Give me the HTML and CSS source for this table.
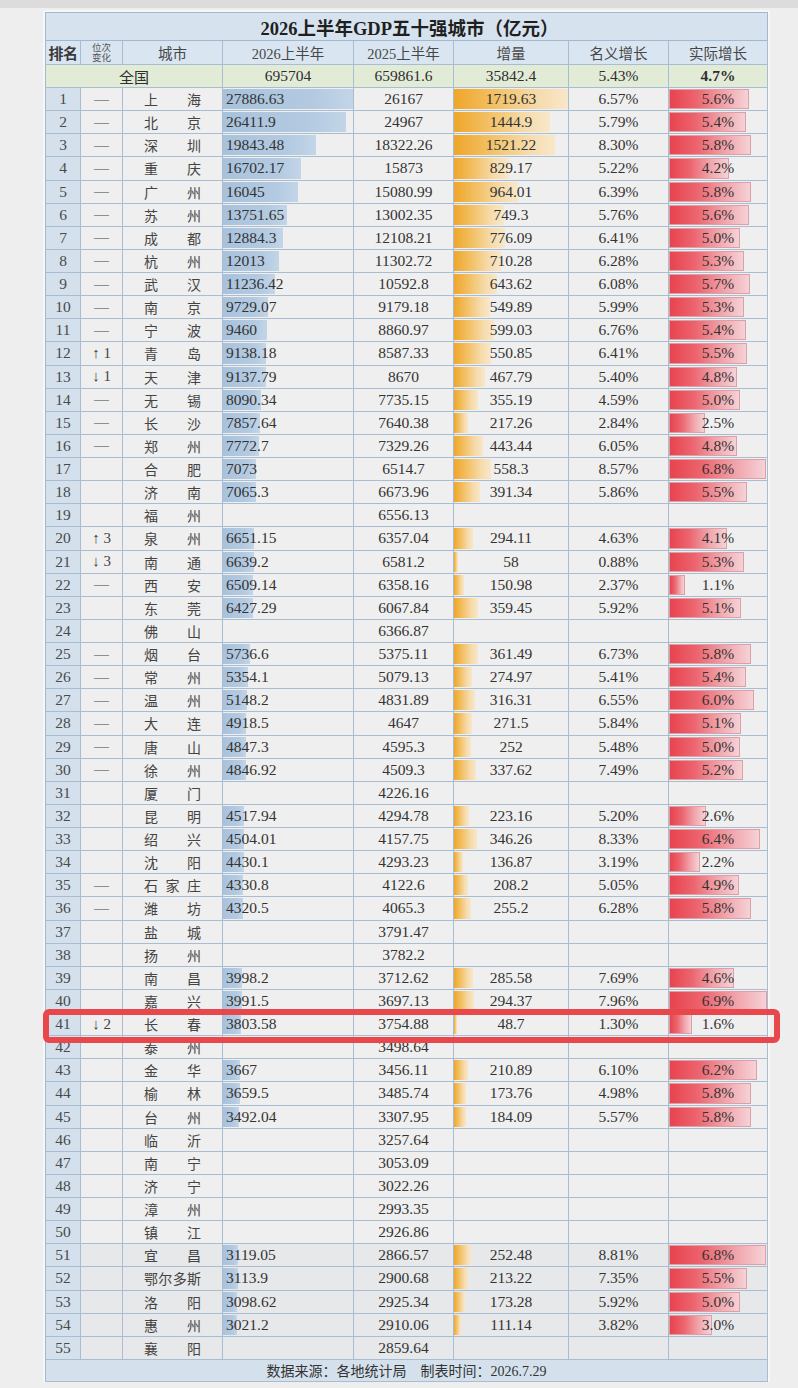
FILE: index.html
```html
<!DOCTYPE html>
<html lang="zh-CN">
<head>
<meta charset="utf-8">
<title>2026上半年GDP五十强城市</title>
<link rel="stylesheet" href="styles.css">
</head>
<body>
<div class="strip"></div>
<div class="sheet">
  <div class="title">2026上半年GDP五十强城市（亿元）</div>
  <div class="row head">
    <div class="c rank hrank">排名</div>
    <div class="c hsmall">位次<br>变化</div>
    <div class="c">城市</div>
    <div class="c">2026上半年</div>
    <div class="c">2025上半年</div>
    <div class="c">增量</div>
    <div class="c">名义增长</div>
    <div class="c">实际增长</div>
  </div>
  <div class="row total">
    <div class="c span3">全国</div>
    <div class="c">695704</div>
    <div class="c">659861.6</div>
    <div class="c">35842.4</div>
    <div class="c">5.43%</div>
    <div class="c bold">4.7%</div>
  </div>

  <div class="row"><div class="c rank">1</div><div class="c chg">—</div><div class="c city"><span>上海</span></div><div class="c v26"><span class="bar b1" style="width:100%"></span><span class="t">27886.63</span></div><div class="c">26167</div><div class="c"><span class="bar b2" style="width:100%"></span><span class="t">1719.63</span></div><div class="c">6.57%</div><div class="c"><span class="bar b3" style="width:81.16%"></span><span class="t">5.6%</span></div></div>
  <div class="row"><div class="c rank">2</div><div class="c chg">—</div><div class="c city"><span>北京</span></div><div class="c v26"><span class="bar b1" style="width:94.71%"></span><span class="t">26411.9</span></div><div class="c">24967</div><div class="c"><span class="bar b2" style="width:84.02%"></span><span class="t">1444.9</span></div><div class="c">5.79%</div><div class="c"><span class="bar b3" style="width:78.26%"></span><span class="t">5.4%</span></div></div>
  <div class="row"><div class="c rank">3</div><div class="c chg">—</div><div class="c city"><span>深圳</span></div><div class="c v26"><span class="bar b1" style="width:71.16%"></span><span class="t">19843.48</span></div><div class="c">18322.26</div><div class="c"><span class="bar b2" style="width:88.46%"></span><span class="t">1521.22</span></div><div class="c">8.30%</div><div class="c"><span class="bar b3" style="width:84.06%"></span><span class="t">5.8%</span></div></div>
  <div class="row"><div class="c rank">4</div><div class="c chg">—</div><div class="c city"><span>重庆</span></div><div class="c v26"><span class="bar b1" style="width:59.89%"></span><span class="t">16702.17</span></div><div class="c">15873</div><div class="c"><span class="bar b2" style="width:48.22%"></span><span class="t">829.17</span></div><div class="c">5.22%</div><div class="c"><span class="bar b3" style="width:60.87%"></span><span class="t">4.2%</span></div></div>
  <div class="row"><div class="c rank">5</div><div class="c chg">—</div><div class="c city"><span>广州</span></div><div class="c v26"><span class="bar b1" style="width:57.54%"></span><span class="t">16045</span></div><div class="c">15080.99</div><div class="c"><span class="bar b2" style="width:56.06%"></span><span class="t">964.01</span></div><div class="c">6.39%</div><div class="c"><span class="bar b3" style="width:84.06%"></span><span class="t">5.8%</span></div></div>
  <div class="row"><div class="c rank">6</div><div class="c chg">—</div><div class="c city"><span>苏州</span></div><div class="c v26"><span class="bar b1" style="width:49.31%"></span><span class="t">13751.65</span></div><div class="c">13002.35</div><div class="c"><span class="bar b2" style="width:43.57%"></span><span class="t">749.3</span></div><div class="c">5.76%</div><div class="c"><span class="bar b3" style="width:81.16%"></span><span class="t">5.6%</span></div></div>
  <div class="row"><div class="c rank">7</div><div class="c chg">—</div><div class="c city"><span>成都</span></div><div class="c v26"><span class="bar b1" style="width:46.20%"></span><span class="t">12884.3</span></div><div class="c">12108.21</div><div class="c"><span class="bar b2" style="width:45.13%"></span><span class="t">776.09</span></div><div class="c">6.41%</div><div class="c"><span class="bar b3" style="width:72.46%"></span><span class="t">5.0%</span></div></div>
  <div class="row"><div class="c rank">8</div><div class="c chg">—</div><div class="c city"><span>杭州</span></div><div class="c v26"><span class="bar b1" style="width:43.08%"></span><span class="t">12013</span></div><div class="c">11302.72</div><div class="c"><span class="bar b2" style="width:41.30%"></span><span class="t">710.28</span></div><div class="c">6.28%</div><div class="c"><span class="bar b3" style="width:76.81%"></span><span class="t">5.3%</span></div></div>
  <div class="row"><div class="c rank">9</div><div class="c chg">—</div><div class="c city"><span>武汉</span></div><div class="c v26"><span class="bar b1" style="width:40.29%"></span><span class="t">11236.42</span></div><div class="c">10592.8</div><div class="c"><span class="bar b2" style="width:37.43%"></span><span class="t">643.62</span></div><div class="c">6.08%</div><div class="c"><span class="bar b3" style="width:82.61%"></span><span class="t">5.7%</span></div></div>
  <div class="row"><div class="c rank">10</div><div class="c chg">—</div><div class="c city"><span>南京</span></div><div class="c v26"><span class="bar b1" style="width:34.89%"></span><span class="t">9729.07</span></div><div class="c">9179.18</div><div class="c"><span class="bar b2" style="width:31.98%"></span><span class="t">549.89</span></div><div class="c">5.99%</div><div class="c"><span class="bar b3" style="width:76.81%"></span><span class="t">5.3%</span></div></div>
  <div class="row"><div class="c rank">11</div><div class="c chg">—</div><div class="c city"><span>宁波</span></div><div class="c v26"><span class="bar b1" style="width:33.92%"></span><span class="t">9460</span></div><div class="c">8860.97</div><div class="c"><span class="bar b2" style="width:34.84%"></span><span class="t">599.03</span></div><div class="c">6.76%</div><div class="c"><span class="bar b3" style="width:78.26%"></span><span class="t">5.4%</span></div></div>
  <div class="row"><div class="c rank">12</div><div class="c chg">↑ 1</div><div class="c city"><span>青岛</span></div><div class="c v26"><span class="bar b1" style="width:32.77%"></span><span class="t">9138.18</span></div><div class="c">8587.33</div><div class="c"><span class="bar b2" style="width:32.03%"></span><span class="t">550.85</span></div><div class="c">6.41%</div><div class="c"><span class="bar b3" style="width:79.71%"></span><span class="t">5.5%</span></div></div>
  <div class="row"><div class="c rank">13</div><div class="c chg">↓ 1</div><div class="c city"><span>天津</span></div><div class="c v26"><span class="bar b1" style="width:32.77%"></span><span class="t">9137.79</span></div><div class="c">8670</div><div class="c"><span class="bar b2" style="width:27.20%"></span><span class="t">467.79</span></div><div class="c">5.40%</div><div class="c"><span class="bar b3" style="width:69.57%"></span><span class="t">4.8%</span></div></div>
  <div class="row"><div class="c rank">14</div><div class="c chg">—</div><div class="c city"><span>无锡</span></div><div class="c v26"><span class="bar b1" style="width:29.01%"></span><span class="t">8090.34</span></div><div class="c">7735.15</div><div class="c"><span class="bar b2" style="width:20.66%"></span><span class="t">355.19</span></div><div class="c">4.59%</div><div class="c"><span class="bar b3" style="width:72.46%"></span><span class="t">5.0%</span></div></div>
  <div class="row"><div class="c rank">15</div><div class="c chg">—</div><div class="c city"><span>长沙</span></div><div class="c v26"><span class="bar b1" style="width:28.18%"></span><span class="t">7857.64</span></div><div class="c">7640.38</div><div class="c"><span class="bar b2" style="width:12.63%"></span><span class="t">217.26</span></div><div class="c">2.84%</div><div class="c"><span class="bar b3" style="width:36.23%"></span><span class="t">2.5%</span></div></div>
  <div class="row"><div class="c rank">16</div><div class="c chg">—</div><div class="c city"><span>郑州</span></div><div class="c v26"><span class="bar b1" style="width:27.87%"></span><span class="t">7772.7</span></div><div class="c">7329.26</div><div class="c"><span class="bar b2" style="width:25.79%"></span><span class="t">443.44</span></div><div class="c">6.05%</div><div class="c"><span class="bar b3" style="width:69.57%"></span><span class="t">4.8%</span></div></div>
  <div class="row"><div class="c rank">17</div><div class="c chg"></div><div class="c city"><span>合肥</span></div><div class="c v26"><span class="bar b1" style="width:25.36%"></span><span class="t">7073</span></div><div class="c">6514.7</div><div class="c"><span class="bar b2" style="width:32.47%"></span><span class="t">558.3</span></div><div class="c">8.57%</div><div class="c"><span class="bar b3" style="width:98.55%"></span><span class="t">6.8%</span></div></div>
  <div class="row"><div class="c rank">18</div><div class="c chg"></div><div class="c city"><span>济南</span></div><div class="c v26"><span class="bar b1" style="width:25.34%"></span><span class="t">7065.3</span></div><div class="c">6673.96</div><div class="c"><span class="bar b2" style="width:22.76%"></span><span class="t">391.34</span></div><div class="c">5.86%</div><div class="c"><span class="bar b3" style="width:79.71%"></span><span class="t">5.5%</span></div></div>
  <div class="row"><div class="c rank">19</div><div class="c chg"></div><div class="c city"><span>福州</span></div><div class="c v26"></div><div class="c">6556.13</div><div class="c"></div><div class="c"></div><div class="c"></div></div>
  <div class="row"><div class="c rank">20</div><div class="c chg">↑ 3</div><div class="c city"><span>泉州</span></div><div class="c v26"><span class="bar b1" style="width:23.85%"></span><span class="t">6651.15</span></div><div class="c">6357.04</div><div class="c"><span class="bar b2" style="width:17.10%"></span><span class="t">294.11</span></div><div class="c">4.63%</div><div class="c"><span class="bar b3" style="width:59.42%"></span><span class="t">4.1%</span></div></div>
  <div class="row"><div class="c rank">21</div><div class="c chg">↓ 3</div><div class="c city"><span>南通</span></div><div class="c v26"><span class="bar b1" style="width:23.81%"></span><span class="t">6639.2</span></div><div class="c">6581.2</div><div class="c"><span class="bar b2" style="width:3.37%"></span><span class="t">58</span></div><div class="c">0.88%</div><div class="c"><span class="bar b3" style="width:76.81%"></span><span class="t">5.3%</span></div></div>
  <div class="row"><div class="c rank">22</div><div class="c chg">—</div><div class="c city"><span>西安</span></div><div class="c v26"><span class="bar b1" style="width:23.34%"></span><span class="t">6509.14</span></div><div class="c">6358.16</div><div class="c"><span class="bar b2" style="width:8.78%"></span><span class="t">150.98</span></div><div class="c">2.37%</div><div class="c"><span class="bar b3" style="width:15.94%"></span><span class="t">1.1%</span></div></div>
  <div class="row"><div class="c rank">23</div><div class="c chg"></div><div class="c city"><span>东莞</span></div><div class="c v26"><span class="bar b1" style="width:23.05%"></span><span class="t">6427.29</span></div><div class="c">6067.84</div><div class="c"><span class="bar b2" style="width:20.90%"></span><span class="t">359.45</span></div><div class="c">5.92%</div><div class="c"><span class="bar b3" style="width:73.91%"></span><span class="t">5.1%</span></div></div>
  <div class="row"><div class="c rank">24</div><div class="c chg"></div><div class="c city"><span>佛山</span></div><div class="c v26"></div><div class="c">6366.87</div><div class="c"></div><div class="c"></div><div class="c"></div></div>
  <div class="row"><div class="c rank">25</div><div class="c chg">—</div><div class="c city"><span>烟台</span></div><div class="c v26"><span class="bar b1" style="width:20.57%"></span><span class="t">5736.6</span></div><div class="c">5375.11</div><div class="c"><span class="bar b2" style="width:21.02%"></span><span class="t">361.49</span></div><div class="c">6.73%</div><div class="c"><span class="bar b3" style="width:84.06%"></span><span class="t">5.8%</span></div></div>
  <div class="row"><div class="c rank">26</div><div class="c chg">—</div><div class="c city"><span>常州</span></div><div class="c v26"><span class="bar b1" style="width:19.20%"></span><span class="t">5354.1</span></div><div class="c">5079.13</div><div class="c"><span class="bar b2" style="width:15.99%"></span><span class="t">274.97</span></div><div class="c">5.41%</div><div class="c"><span class="bar b3" style="width:78.26%"></span><span class="t">5.4%</span></div></div>
  <div class="row"><div class="c rank">27</div><div class="c chg">—</div><div class="c city"><span>温州</span></div><div class="c v26"><span class="bar b1" style="width:18.46%"></span><span class="t">5148.2</span></div><div class="c">4831.89</div><div class="c"><span class="bar b2" style="width:18.39%"></span><span class="t">316.31</span></div><div class="c">6.55%</div><div class="c"><span class="bar b3" style="width:86.96%"></span><span class="t">6.0%</span></div></div>
  <div class="row"><div class="c rank">28</div><div class="c chg">—</div><div class="c city"><span>大连</span></div><div class="c v26"><span class="bar b1" style="width:17.64%"></span><span class="t">4918.5</span></div><div class="c">4647</div><div class="c"><span class="bar b2" style="width:15.79%"></span><span class="t">271.5</span></div><div class="c">5.84%</div><div class="c"><span class="bar b3" style="width:73.91%"></span><span class="t">5.1%</span></div></div>
  <div class="row"><div class="c rank">29</div><div class="c chg">—</div><div class="c city"><span>唐山</span></div><div class="c v26"><span class="bar b1" style="width:17.38%"></span><span class="t">4847.3</span></div><div class="c">4595.3</div><div class="c"><span class="bar b2" style="width:14.65%"></span><span class="t">252</span></div><div class="c">5.48%</div><div class="c"><span class="bar b3" style="width:72.46%"></span><span class="t">5.0%</span></div></div>
  <div class="row"><div class="c rank">30</div><div class="c chg">—</div><div class="c city"><span>徐州</span></div><div class="c v26"><span class="bar b1" style="width:17.38%"></span><span class="t">4846.92</span></div><div class="c">4509.3</div><div class="c"><span class="bar b2" style="width:19.63%"></span><span class="t">337.62</span></div><div class="c">7.49%</div><div class="c"><span class="bar b3" style="width:75.36%"></span><span class="t">5.2%</span></div></div>
  <div class="row"><div class="c rank">31</div><div class="c chg"></div><div class="c city"><span>厦门</span></div><div class="c v26"></div><div class="c">4226.16</div><div class="c"></div><div class="c"></div><div class="c"></div></div>
  <div class="row"><div class="c rank">32</div><div class="c chg"></div><div class="c city"><span>昆明</span></div><div class="c v26"><span class="bar b1" style="width:16.20%"></span><span class="t">4517.94</span></div><div class="c">4294.78</div><div class="c"><span class="bar b2" style="width:12.98%"></span><span class="t">223.16</span></div><div class="c">5.20%</div><div class="c"><span class="bar b3" style="width:37.68%"></span><span class="t">2.6%</span></div></div>
  <div class="row"><div class="c rank">33</div><div class="c chg"></div><div class="c city"><span>绍兴</span></div><div class="c v26"><span class="bar b1" style="width:16.15%"></span><span class="t">4504.01</span></div><div class="c">4157.75</div><div class="c"><span class="bar b2" style="width:20.14%"></span><span class="t">346.26</span></div><div class="c">8.33%</div><div class="c"><span class="bar b3" style="width:92.75%"></span><span class="t">6.4%</span></div></div>
  <div class="row"><div class="c rank">34</div><div class="c chg"></div><div class="c city"><span>沈阳</span></div><div class="c v26"><span class="bar b1" style="width:15.89%"></span><span class="t">4430.1</span></div><div class="c">4293.23</div><div class="c"><span class="bar b2" style="width:7.96%"></span><span class="t">136.87</span></div><div class="c">3.19%</div><div class="c"><span class="bar b3" style="width:31.88%"></span><span class="t">2.2%</span></div></div>
  <div class="row"><div class="c rank">35</div><div class="c chg">—</div><div class="c city"><span>石家庄</span></div><div class="c v26"><span class="bar b1" style="width:15.53%"></span><span class="t">4330.8</span></div><div class="c">4122.6</div><div class="c"><span class="bar b2" style="width:12.11%"></span><span class="t">208.2</span></div><div class="c">5.05%</div><div class="c"><span class="bar b3" style="width:71.01%"></span><span class="t">4.9%</span></div></div>
  <div class="row"><div class="c rank">36</div><div class="c chg">—</div><div class="c city"><span>潍坊</span></div><div class="c v26"><span class="bar b1" style="width:15.49%"></span><span class="t">4320.5</span></div><div class="c">4065.3</div><div class="c"><span class="bar b2" style="width:14.84%"></span><span class="t">255.2</span></div><div class="c">6.28%</div><div class="c"><span class="bar b3" style="width:84.06%"></span><span class="t">5.8%</span></div></div>
  <div class="row"><div class="c rank">37</div><div class="c chg"></div><div class="c city"><span>盐城</span></div><div class="c v26"></div><div class="c">3791.47</div><div class="c"></div><div class="c"></div><div class="c"></div></div>
  <div class="row"><div class="c rank">38</div><div class="c chg"></div><div class="c city"><span>扬州</span></div><div class="c v26"></div><div class="c">3782.2</div><div class="c"></div><div class="c"></div><div class="c"></div></div>
  <div class="row"><div class="c rank">39</div><div class="c chg"></div><div class="c city"><span>南昌</span></div><div class="c v26"><span class="bar b1" style="width:14.34%"></span><span class="t">3998.2</span></div><div class="c">3712.62</div><div class="c"><span class="bar b2" style="width:16.61%"></span><span class="t">285.58</span></div><div class="c">7.69%</div><div class="c"><span class="bar b3" style="width:66.67%"></span><span class="t">4.6%</span></div></div>
  <div class="row"><div class="c rank">40</div><div class="c chg"></div><div class="c city"><span>嘉兴</span></div><div class="c v26"><span class="bar b1" style="width:14.31%"></span><span class="t">3991.5</span></div><div class="c">3697.13</div><div class="c"><span class="bar b2" style="width:17.12%"></span><span class="t">294.37</span></div><div class="c">7.96%</div><div class="c"><span class="bar b3" style="width:100%"></span><span class="t">6.9%</span></div></div>
  <div class="row"><div class="c rank">41</div><div class="c chg">↓ 2</div><div class="c city"><span>长春</span></div><div class="c v26"><span class="bar b1" style="width:13.64%"></span><span class="t">3803.58</span></div><div class="c">3754.88</div><div class="c"><span class="bar b2" style="width:2.83%"></span><span class="t">48.7</span></div><div class="c">1.30%</div><div class="c"><span class="bar b3" style="width:23.19%"></span><span class="t">1.6%</span></div></div>
  <div class="row"><div class="c rank">42</div><div class="c chg"></div><div class="c city"><span>泰州</span></div><div class="c v26"></div><div class="c">3498.64</div><div class="c"></div><div class="c"></div><div class="c"></div></div>
  <div class="row"><div class="c rank">43</div><div class="c chg"></div><div class="c city"><span>金华</span></div><div class="c v26"><span class="bar b1" style="width:13.15%"></span><span class="t">3667</span></div><div class="c">3456.11</div><div class="c"><span class="bar b2" style="width:12.26%"></span><span class="t">210.89</span></div><div class="c">6.10%</div><div class="c"><span class="bar b3" style="width:89.86%"></span><span class="t">6.2%</span></div></div>
  <div class="row"><div class="c rank">44</div><div class="c chg"></div><div class="c city"><span>榆林</span></div><div class="c v26"><span class="bar b1" style="width:13.12%"></span><span class="t">3659.5</span></div><div class="c">3485.74</div><div class="c"><span class="bar b2" style="width:10.10%"></span><span class="t">173.76</span></div><div class="c">4.98%</div><div class="c"><span class="bar b3" style="width:84.06%"></span><span class="t">5.8%</span></div></div>
  <div class="row"><div class="c rank">45</div><div class="c chg"></div><div class="c city"><span>台州</span></div><div class="c v26"><span class="bar b1" style="width:12.52%"></span><span class="t">3492.04</span></div><div class="c">3307.95</div><div class="c"><span class="bar b2" style="width:10.71%"></span><span class="t">184.09</span></div><div class="c">5.57%</div><div class="c"><span class="bar b3" style="width:84.06%"></span><span class="t">5.8%</span></div></div>
  <div class="row"><div class="c rank">46</div><div class="c chg"></div><div class="c city"><span>临沂</span></div><div class="c v26"></div><div class="c">3257.64</div><div class="c"></div><div class="c"></div><div class="c"></div></div>
  <div class="row"><div class="c rank">47</div><div class="c chg"></div><div class="c city"><span>南宁</span></div><div class="c v26"></div><div class="c">3053.09</div><div class="c"></div><div class="c"></div><div class="c"></div></div>
  <div class="row"><div class="c rank">48</div><div class="c chg"></div><div class="c city"><span>济宁</span></div><div class="c v26"></div><div class="c">3022.26</div><div class="c"></div><div class="c"></div><div class="c"></div></div>
  <div class="row"><div class="c rank">49</div><div class="c chg"></div><div class="c city"><span>漳州</span></div><div class="c v26"></div><div class="c">2993.35</div><div class="c"></div><div class="c"></div><div class="c"></div></div>
  <div class="row"><div class="c rank">50</div><div class="c chg"></div><div class="c city"><span>镇江</span></div><div class="c v26"></div><div class="c">2926.86</div><div class="c"></div><div class="c"></div><div class="c"></div></div>
  <div class="row dim"><div class="c rank">51</div><div class="c chg"></div><div class="c city"><span>宜昌</span></div><div class="c v26"><span class="bar b1" style="width:11.18%"></span><span class="t">3119.05</span></div><div class="c">2866.57</div><div class="c"><span class="bar b2" style="width:14.68%"></span><span class="t">252.48</span></div><div class="c">8.81%</div><div class="c"><span class="bar b3" style="width:98.55%"></span><span class="t">6.8%</span></div></div>
  <div class="row dim"><div class="c rank">52</div><div class="c chg"></div><div class="c city"><span>鄂尔多斯</span></div><div class="c v26"><span class="bar b1" style="width:11.17%"></span><span class="t">3113.9</span></div><div class="c">2900.68</div><div class="c"><span class="bar b2" style="width:12.40%"></span><span class="t">213.22</span></div><div class="c">7.35%</div><div class="c"><span class="bar b3" style="width:79.71%"></span><span class="t">5.5%</span></div></div>
  <div class="row dim"><div class="c rank">53</div><div class="c chg"></div><div class="c city"><span>洛阳</span></div><div class="c v26"><span class="bar b1" style="width:11.11%"></span><span class="t">3098.62</span></div><div class="c">2925.34</div><div class="c"><span class="bar b2" style="width:10.08%"></span><span class="t">173.28</span></div><div class="c">5.92%</div><div class="c"><span class="bar b3" style="width:72.46%"></span><span class="t">5.0%</span></div></div>
  <div class="row dim"><div class="c rank">54</div><div class="c chg"></div><div class="c city"><span>惠州</span></div><div class="c v26"><span class="bar b1" style="width:10.83%"></span><span class="t">3021.2</span></div><div class="c">2910.06</div><div class="c"><span class="bar b2" style="width:6.46%"></span><span class="t">111.14</span></div><div class="c">3.82%</div><div class="c"><span class="bar b3" style="width:43.48%"></span><span class="t">3.0%</span></div></div>
  <div class="row dim"><div class="c rank">55</div><div class="c chg"></div><div class="c city"><span>襄阳</span></div><div class="c v26"></div><div class="c">2859.64</div><div class="c"></div><div class="c"></div><div class="c"></div></div>

  <div class="foot">数据来源：各地统计局　制表时间：2026.7.29</div>

  <div class="mark"></div>
</div>
</body>
</html>
```

FILE: styles.css
```css
html, body {
  margin: 0;
  padding: 0;
}

body {
  background: #eeeeee;
  font-family: "Liberation Serif", "Noto Sans CJK SC", serif;
  color: #333333;
}

.strip {
  height: 8px;
  background: #dcdcdc;
}

.sheet {
  position: relative;
  width: 723px;
  margin: 4px 0 0 45px;
  box-sizing: border-box;
  border-left: 1px solid #a3b8ce;
  border-top: 1px solid #a3b8ce;
  background: #efefef;
  box-shadow: 0 0 0 2px #f7f7f7;
}

.title {
  height: 28px;
  box-sizing: border-box;
  border-right: 1px solid #a3b8ce;
  border-bottom: 1px solid #a3b8ce;
  background: #d6e3ef;
  display: flex;
  align-items: center;
  justify-content: center;
  font-size: 18.5px;
  font-weight: bold;
  color: #1f1f1f;
  padding-left: 6px;
}

.row {
  display: grid;
  grid-template-columns: 35px 42px 100px 131px 100px 115px 100px 99px;
  height: 23.127px;
}

.c {
  position: relative;
  box-sizing: border-box;
  border-right: 1px solid #a9bdd2;
  border-bottom: 1px solid #a9bdd2;
  display: flex;
  align-items: center;
  justify-content: center;
  font-size: 15.5px;
  color: #333333;
  white-space: nowrap;
  overflow: hidden;
  background: #efefef;
}

.rank {
  background: #d4e1ed;
  color: #4a4a4a;
}

.head {
  height: 24px;
}

.head .c {
  background: #d9e5f0;
  font-size: 14.5px;
  color: #474747;
}

.head .hrank {
  font-size: 15px;
  font-weight: 700;
  color: #3a3a3a;
  letter-spacing: -0.5px;
}

.head .hsmall {
  font-size: 9.5px;
  line-height: 10px;
  text-align: center;
  color: #555555;
}

.total {
  height: 23px;
}

.total .c {
  background: #e2ebd6;
  color: #2e2e2e;
}

.span3 {
  grid-column: span 3;
  font-size: 15px;
}

.bold {
  font-weight: bold;
}

.chg {
  color: #444444;
  font-size: 15px;
}

.city {
  color: #444444;
  font-size: 14px;
}

.city span {
  display: inline-block;
  width: 57px;
  text-align: justify;
  text-align-last: justify;
}

.v26 {
  justify-content: flex-start;
  padding-left: 3px;
}

.bar {
  position: absolute;
  left: 0;
  top: 1px;
  bottom: 1px;
}

.b1 {
  background: linear-gradient(90deg, #a9c2dc 0%, #b3cae1 70%, #c3d5e8 100%);
}

.b2 {
  background: linear-gradient(90deg, #efa62a 0%, #f2c063 35%, #f6dcae 75%, #f8e7c9 100%);
}

.b3 {
  box-sizing: border-box;
  border: 1px solid #dca0a8;
  background: linear-gradient(90deg, #e8434e 0%, #ec6670 35%, #f1a5ac 70%, #f5d2d6 100%);
}

.t {
  position: relative;
}

.dim .c {
  background: #e7e8e9;
}

.dim .rank {
  background: #d4e1ed;
}

.foot {
  height: 22px;
  box-sizing: border-box;
  border-right: 1px solid #a9bdd2;
  border-bottom: 1px solid #a9bdd2;
  background: #d4e1ed;
  display: flex;
  align-items: center;
  justify-content: center;
  font-size: 14px;
  color: #333333;
}

.mark {
  position: absolute;
  left: -3px;
  top: 996px;
  width: 737px;
  height: 34px;
  box-sizing: border-box;
  border: 6px solid #e8474c;
  border-radius: 6px;
}
```
